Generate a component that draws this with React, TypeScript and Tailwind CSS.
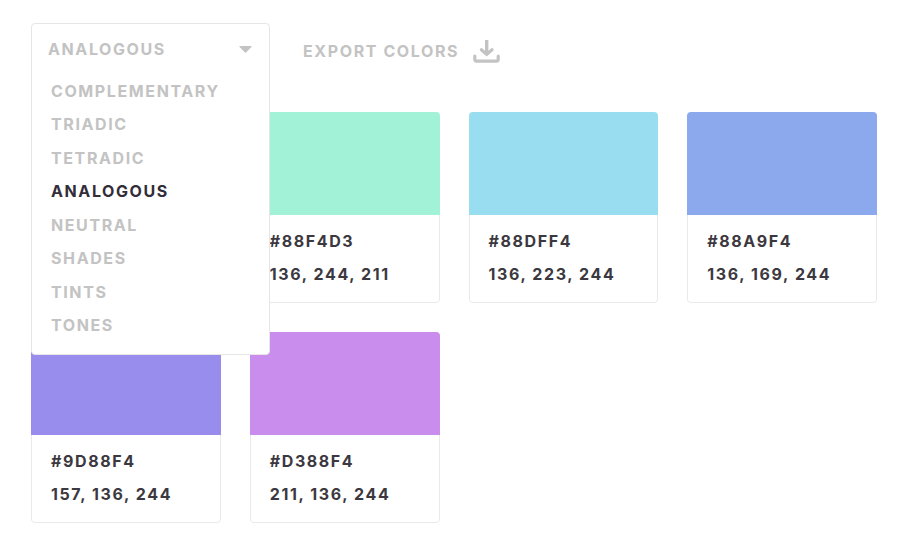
import { useState } from 'react';
import type { MouseEvent } from 'react';

const SCHEMES = ['Complementary', 'Triadic', 'Tetradic', 'Analogous', 'Neutral', 'Shades', 'Tints', 'Tones'];

const COLORS = [
  { hex: '#88F49D', rgb: '136, 244, 157', swatch: 'bg-[#a2f2b2]' },
  { hex: '#88F4D3', rgb: '136, 244, 211', swatch: 'bg-[#a2f2d7]' },
  { hex: '#88DFF4', rgb: '136, 223, 244', swatch: 'bg-[#99ddf0]' },
  { hex: '#88A9F4', rgb: '136, 169, 244', swatch: 'bg-[#8ca9ed]' },
  { hex: '#9D88F4', rgb: '157, 136, 244', swatch: 'bg-[#988dec]' },
  { hex: '#D388F4', rgb: '211, 136, 244', swatch: 'bg-[#c98ded]' },
];

function DownloadIcon() {
  return (
    <svg className="w-[27px] h-6" viewBox="0 0 27 24" fill="none" stroke="currentColor" strokeLinecap="round" aria-hidden="true">
      <path strokeWidth={3.2} d="M1.8 17v3.2q0 2 2 2h19.4q2 0 2-2V17" />
      <path strokeWidth={3.4} strokeLinecap="butt" d="M13.7 1v13" />
      <path strokeWidth={3.2} d="M8.4 10.8l5.3 4.6 5.3-4.6" />
    </svg>
  );
}

type SchemePickerProps = {
  open: boolean;
  onToggle: () => void;
};

function SchemePicker({ open, onToggle }: SchemePickerProps) {
  const [scheme, setScheme] = useState('Analogous');

  // The list below replaces the browser's own popup
  const handleMouseDown = (e: MouseEvent) => {
    e.preventDefault();
    onToggle();
  };

  return (
    <div className="relative w-[239px] h-14">
      <div className="absolute inset-x-0 top-0 z-10 bg-white border border-[#e6e6e6] rounded">
        <div className="relative">
          <select
            aria-label="Color scheme"
            value={scheme}
            onChange={(e) => setScheme(e.target.value)}
            onMouseDown={handleMouseDown}
            className="block w-full h-[50px] pl-4 pr-10 appearance-none bg-transparent uppercase tracking-widest cursor-pointer outline-none"
          >
            {SCHEMES.map((name) => (
              <option key={name} value={name}>{name}</option>
            ))}
          </select>
          <svg className="absolute right-[17px] top-[22px] w-[13px] h-[7px] pointer-events-none" viewBox="0 0 13 7" fill="currentColor" aria-hidden="true">
            <path d="M1 0h11q1 0.2 0.4 1L7.3 6.3q-0.8 0.8-1.6 0L0.6 1Q0 0.2 1 0z" />
          </svg>
        </div>

        {open && (
          <ul className="grid auto-rows-fr h-[268px] mb-3">
            {SCHEMES.map((name) => (
              <li key={name} className="flex">
                <button
                  type="button"
                  onClick={() => setScheme(name)}
                  className={`w-full px-[19px] text-left uppercase tracking-widest cursor-pointer ${
                    name === scheme ? 'text-[#322d38]' : 'hover:text-[#322d38]'
                  }`}
                >
                  {name}
                </button>
              </li>
            ))}
          </ul>
        )}
      </div>
    </div>
  );
}

export default function App() {
  const [open, setOpen] = useState(true);

  return (
    <main className="min-h-screen bg-white pt-[23px] pb-6 pl-[31px] pr-[23px] font-['Inter','Liberation_Sans',sans-serif] font-bold text-base text-[#c3c3c3]">
      <header className="flex items-center gap-[33px] mb-[33px]">
        <SchemePicker open={open} onToggle={() => setOpen(!open)} />
        <button type="button" className="flex items-center gap-[14px] uppercase tracking-widest cursor-pointer">
          Export colors
          <DownloadIcon />
        </button>
      </header>

      <section className="grid grid-cols-4 gap-[29px]">
        {COLORS.map((color, i) => (
          // the open list covers the first card completely
          <article key={color.hex} className={`rounded overflow-hidden ${open && i === 0 ? 'invisible' : ''}`}>
            <div className={`h-[103px] ${color.swatch}`} />
            <div className="px-[19px] pt-[10px] pb-[11px] border border-t-0 border-[#e9e9e9] rounded-b text-[#3c3840] tracking-widest whitespace-nowrap">
              <p className="leading-[33px]">{color.hex}</p>
              <p className="leading-[33px]">{color.rgb}</p>
            </div>
          </article>
        ))}
      </section>
    </main>
  );
}
